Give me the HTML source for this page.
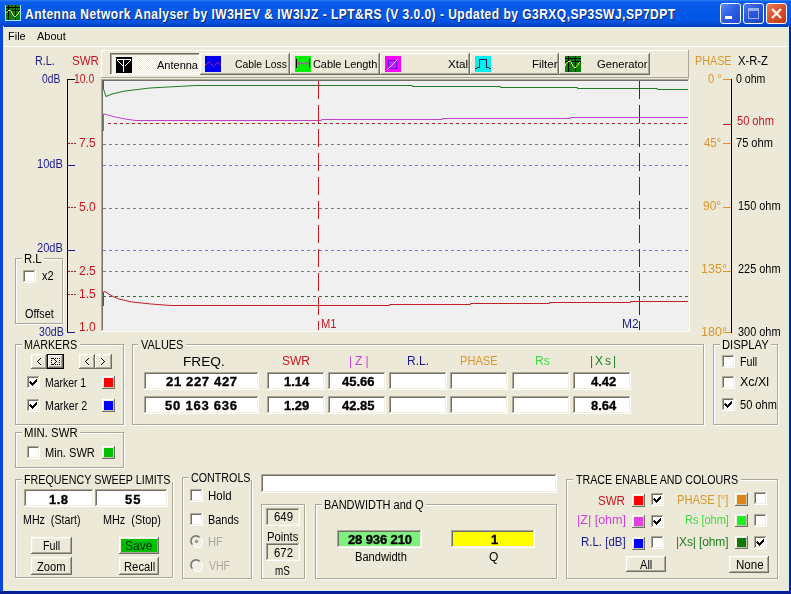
<!DOCTYPE html><html><head><meta charset="utf-8"><style>
html,body{margin:0;padding:0;width:791px;height:594px;overflow:hidden;background:#ECE9D8}
body{position:relative;font-family:"Liberation Sans",sans-serif;font-size:11px;color:#000}
body>div,body>svg{position:absolute}
#tx{position:absolute;left:0;top:0;width:791px;height:594px;will-change:transform}
#tx>div{position:absolute}
</style></head><body>
<div style="left:0;top:0;width:791px;height:27px;background:linear-gradient(#3C86F2 0px,#1565EE 1px,#0A5CEA 3px,#0558E8 12px,#0456E4 20px,#0350DA 23px,#0246CC 25px,#0A3CB8 26px,#0A3CB8 27px)"></div>
<div style="left:0px;top:26px;width:3px;height:568px;background:#0846E0;"></div>
<div style="left:3px;top:26px;width:1px;height:565px;background:#D8ECFA;"></div>
<div style="left:789px;top:26px;width:2px;height:568px;background:#0A24A0;"></div>
<div style="left:788px;top:26px;width:1px;height:565px;background:#D8ECFA;"></div>
<div style="left:0px;top:591px;width:791px;height:3px;background:#0A1E98;"></div>
<div style="left:3px;top:590px;width:786px;height:1px;background:#D8ECFA;"></div>
<div style="left:4px;top:27px;width:784px;height:563px;background:#ECE9D8;"></div>
<div style="left:3px;top:27px;width:786px;height:1px;background:#D8ECFA;"></div>
<div style="left:25px;top:4px;font-size:14px;line-height:20px;font-weight:bold;color:#fff;white-space:pre;letter-spacing:0.55px;transform:scaleX(0.859);transform-origin:0 0;text-shadow:1px 1px 0 #0A246A" id="ttl">Antenna Network Analyser by IW3HEV &amp; IW3IJZ - LPT&amp;RS (V 3.0.0) - Updated by G3RXQ,SP3SWJ,SP7DPT</div>
<div style="left:720px;top:3px;width:21px;height:21px;border:1px solid #fff;box-sizing:border-box;border-radius:3px;background:linear-gradient(135deg,#5A8CF6,#2F60E4 45%,#1E48D0)"></div>
<div style="left:743px;top:3px;width:21px;height:21px;border:1px solid #fff;box-sizing:border-box;border-radius:3px;background:linear-gradient(135deg,#4C78EC,#2A56D8 45%,#1C44C4)"></div>
<div style="left:766px;top:3px;width:21px;height:21px;border:1px solid #fff;box-sizing:border-box;border-radius:3px;background:linear-gradient(135deg,#EC7A54,#D8502A 50%,#C03A14)"></div>
<div style="left:725px;top:16px;width:7px;height:3px;background:#fff;"></div>
<div style="left:748px;top:8px;width:11px;height:11px;border:1px solid #98B0F0;border-top-width:3px;box-sizing:border-box"></div>
<svg style="left:766px;top:3px" width="21" height="21"><path d="M6 6L15 15M15 6L6 15" stroke="#FFF4E8" stroke-width="2.4"/></svg>
<div style="left:4px;top:46px;width:783px;height:1px;background:#FFFFFF;"></div>
<div style="left:67px;top:79px;width:1px;height:254px;background:#000;"></div>
<div style="left:67px;top:79px;width:8px;height:1px;background:#000;"></div>
<svg style="left:68px;top:143px" width="8" height="1"><path d="M0 0.5h8" stroke="#A82020" stroke-dasharray="2 1"/></svg>
<svg style="left:68px;top:207px" width="8" height="1"><path d="M0 0.5h8" stroke="#A82020" stroke-dasharray="2 1"/></svg>
<svg style="left:68px;top:271px" width="8" height="1"><path d="M0 0.5h8" stroke="#A82020" stroke-dasharray="2 1"/></svg>
<svg style="left:68px;top:294px" width="8" height="1"><path d="M0 0.5h8" stroke="#A82020" stroke-dasharray="2 1"/></svg>
<div style="left:68px;top:165px;width:7px;height:1px;background:#1C1C90;"></div>
<div style="left:68px;top:250px;width:7px;height:1px;background:#1C1C90;"></div>
<div style="left:67px;top:332px;width:8px;height:1px;background:#1C1C90;"></div>
<div style="left:16px;top:259px;width:48px;height:66px;border:1px solid #FFFFFF;box-sizing:border-box"></div>
<div style="left:15px;top:258px;width:48px;height:66px;border:1px solid #ACA899;box-sizing:border-box"></div>
<div style="left:22px;top:257px;width:22px;height:4px;background:#ECE9D8;"></div>
<div style="left:23px;top:270px;width:13px;height:13px;background:#fff;"></div>
<div style="left:23px;top:270px;width:13px;height:1px;background:#ACA899;"></div>
<div style="left:23px;top:270px;width:1px;height:13px;background:#ACA899;"></div>
<div style="left:23px;top:282px;width:13px;height:1px;background:#FFFFFF;"></div>
<div style="left:35px;top:270px;width:1px;height:13px;background:#FFFFFF;"></div>
<div style="left:24px;top:271px;width:11px;height:1px;background:#716F64;"></div>
<div style="left:24px;top:271px;width:1px;height:11px;background:#716F64;"></div>
<div style="left:24px;top:281px;width:11px;height:1px;background:#F1EFE2;"></div>
<div style="left:34px;top:271px;width:1px;height:11px;background:#F1EFE2;"></div>
<div style="left:731px;top:79px;width:1px;height:254px;background:#000;"></div>
<div style="left:723px;top:79px;width:8px;height:1px;background:#D8962C;"></div>
<div style="left:723px;top:143px;width:8px;height:1px;background:#D8962C;"></div>
<div style="left:723px;top:207px;width:8px;height:1px;background:#D8962C;"></div>
<div style="left:723px;top:271px;width:8px;height:1px;background:#D8962C;"></div>
<div style="left:723px;top:332px;width:8px;height:1px;background:#D8962C;"></div>
<div style="left:723px;top:124px;width:8px;height:1px;background:#C8141E;"></div>
<div style="left:101px;top:50px;width:588px;height:1px;background:#FFFFFF;"></div>
<div style="left:101px;top:50px;width:1px;height:28px;background:#FFFFFF;"></div>
<div style="left:101px;top:77px;width:588px;height:1px;background:#ACA899;"></div>
<div style="left:688px;top:50px;width:1px;height:28px;background:#ACA899;"></div>
<div style="left:110px;top:53px;width:90px;height:22px;background:repeating-conic-gradient(#FFFFFF 0 25%,#ECE9D8 0 50%) 0 0/2px 2px"></div>
<div style="left:110px;top:53px;width:90px;height:1px;background:#716F64;"></div>
<div style="left:110px;top:53px;width:1px;height:22px;background:#716F64;"></div>
<div style="left:111px;top:54px;width:88px;height:1px;background:#ACA899;"></div>
<div style="left:111px;top:54px;width:1px;height:20px;background:#ACA899;"></div>
<div style="left:110px;top:74px;width:90px;height:1px;background:#FFFFFF;"></div>
<div style="left:199px;top:53px;width:1px;height:22px;background:#FFFFFF;"></div>
<div style="left:200px;top:53px;width:90px;height:22px;background:#ECE9D8;"></div>
<div style="left:200px;top:53px;width:90px;height:1px;background:#FFFFFF;"></div>
<div style="left:200px;top:53px;width:1px;height:22px;background:#FFFFFF;"></div>
<div style="left:200px;top:74px;width:90px;height:1px;background:#716F64;"></div>
<div style="left:289px;top:53px;width:1px;height:22px;background:#716F64;"></div>
<div style="left:201px;top:54px;width:88px;height:1px;background:#F1EFE2;"></div>
<div style="left:201px;top:54px;width:1px;height:20px;background:#F1EFE2;"></div>
<div style="left:201px;top:73px;width:88px;height:1px;background:#ACA899;"></div>
<div style="left:288px;top:54px;width:1px;height:20px;background:#ACA899;"></div>
<div style="left:290px;top:53px;width:90px;height:22px;background:#ECE9D8;"></div>
<div style="left:290px;top:53px;width:90px;height:1px;background:#FFFFFF;"></div>
<div style="left:290px;top:53px;width:1px;height:22px;background:#FFFFFF;"></div>
<div style="left:290px;top:74px;width:90px;height:1px;background:#716F64;"></div>
<div style="left:379px;top:53px;width:1px;height:22px;background:#716F64;"></div>
<div style="left:291px;top:54px;width:88px;height:1px;background:#F1EFE2;"></div>
<div style="left:291px;top:54px;width:1px;height:20px;background:#F1EFE2;"></div>
<div style="left:291px;top:73px;width:88px;height:1px;background:#ACA899;"></div>
<div style="left:378px;top:54px;width:1px;height:20px;background:#ACA899;"></div>
<div style="left:380px;top:53px;width:90px;height:22px;background:#ECE9D8;"></div>
<div style="left:380px;top:53px;width:90px;height:1px;background:#FFFFFF;"></div>
<div style="left:380px;top:53px;width:1px;height:22px;background:#FFFFFF;"></div>
<div style="left:380px;top:74px;width:90px;height:1px;background:#716F64;"></div>
<div style="left:469px;top:53px;width:1px;height:22px;background:#716F64;"></div>
<div style="left:381px;top:54px;width:88px;height:1px;background:#F1EFE2;"></div>
<div style="left:381px;top:54px;width:1px;height:20px;background:#F1EFE2;"></div>
<div style="left:381px;top:73px;width:88px;height:1px;background:#ACA899;"></div>
<div style="left:468px;top:54px;width:1px;height:20px;background:#ACA899;"></div>
<div style="left:470px;top:53px;width:89px;height:22px;background:#ECE9D8;"></div>
<div style="left:470px;top:53px;width:89px;height:1px;background:#FFFFFF;"></div>
<div style="left:470px;top:53px;width:1px;height:22px;background:#FFFFFF;"></div>
<div style="left:470px;top:74px;width:89px;height:1px;background:#716F64;"></div>
<div style="left:558px;top:53px;width:1px;height:22px;background:#716F64;"></div>
<div style="left:471px;top:54px;width:87px;height:1px;background:#F1EFE2;"></div>
<div style="left:471px;top:54px;width:1px;height:20px;background:#F1EFE2;"></div>
<div style="left:471px;top:73px;width:87px;height:1px;background:#ACA899;"></div>
<div style="left:557px;top:54px;width:1px;height:20px;background:#ACA899;"></div>
<div style="left:559px;top:53px;width:91px;height:22px;background:#ECE9D8;"></div>
<div style="left:559px;top:53px;width:91px;height:1px;background:#FFFFFF;"></div>
<div style="left:559px;top:53px;width:1px;height:22px;background:#FFFFFF;"></div>
<div style="left:559px;top:74px;width:91px;height:1px;background:#716F64;"></div>
<div style="left:649px;top:53px;width:1px;height:22px;background:#716F64;"></div>
<div style="left:560px;top:54px;width:89px;height:1px;background:#F1EFE2;"></div>
<div style="left:560px;top:54px;width:1px;height:20px;background:#F1EFE2;"></div>
<div style="left:560px;top:73px;width:89px;height:1px;background:#ACA899;"></div>
<div style="left:648px;top:54px;width:1px;height:20px;background:#ACA899;"></div>
<svg style="left:116px;top:57px" width="16" height="16" shape-rendering="crispEdges"><rect width="16" height="16" fill="#000"/><rect x="1" y="2" width="14" height="1" fill="#fff"/><rect x="7" y="2" width="1" height="13" fill="#fff"/><rect x="1" y="3" width="1" height="1" fill="#fff"/><rect x="2" y="4" width="1" height="1" fill="#fff"/><rect x="3" y="5" width="1" height="1" fill="#fff"/><rect x="4" y="6" width="1" height="1" fill="#fff"/><rect x="5" y="7" width="1" height="1" fill="#fff"/><rect x="6" y="8" width="1" height="1" fill="#fff"/><rect x="14" y="3" width="1" height="1" fill="#fff"/><rect x="13" y="4" width="1" height="1" fill="#fff"/><rect x="12" y="5" width="1" height="1" fill="#fff"/><rect x="11" y="6" width="1" height="1" fill="#fff"/><rect x="10" y="7" width="1" height="1" fill="#fff"/><rect x="9" y="8" width="1" height="1" fill="#fff"/></svg>
<svg style="left:205px;top:56px" width="16" height="16" shape-rendering="crispEdges"><rect width="16" height="16" fill="#0000F0"/><rect x="0" y="8" width="2" height="1" fill="#A0208A"/><rect x="2" y="7" width="1" height="1" fill="#A0208A"/><rect x="3" y="6" width="2" height="1" fill="#A0208A"/><rect x="5" y="7" width="1" height="1" fill="#A0208A"/><rect x="6" y="8" width="1" height="1" fill="#A0208A"/><rect x="7" y="9" width="1" height="1" fill="#A0208A"/><rect x="8" y="10" width="1" height="1" fill="#A0208A"/><rect x="9" y="9" width="1" height="1" fill="#A0208A"/><rect x="10" y="8" width="1" height="1" fill="#A0208A"/><rect x="11" y="7" width="1" height="1" fill="#A0208A"/><rect x="12" y="6" width="2" height="1" fill="#A0208A"/><rect x="14" y="7" width="1" height="1" fill="#A0208A"/><rect x="15" y="8" width="1" height="1" fill="#A0208A"/></svg>
<svg style="left:295px;top:56px" width="16" height="16" shape-rendering="crispEdges"><rect width="16" height="16" fill="#00F000"/><rect x="1" y="3" width="1" height="9" fill="#000"/><rect x="14" y="3" width="1" height="9" fill="#000"/><rect x="3" y="7" width="10" height="1" fill="#9060A0"/><rect x="3" y="6" width="2" height="3" fill="#C050B0"/><rect x="11" y="6" width="2" height="3" fill="#C050B0"/></svg>
<svg style="left:385px;top:56px" width="16" height="16" shape-rendering="crispEdges"><rect width="16" height="16" fill="#FF00FF"/><rect x="3" y="4" width="9" height="9" fill="#6010E0"/><rect x="4" y="5" width="7" height="7" fill="#C020F0"/><rect x="2" y="13" width="1" height="1" fill="#FFC8FF"/><rect x="3" y="12" width="1" height="1" fill="#FFC8FF"/><rect x="4" y="11" width="1" height="1" fill="#FFC8FF"/><rect x="5" y="10" width="1" height="1" fill="#FFC8FF"/><rect x="6" y="9" width="1" height="1" fill="#FFC8FF"/><rect x="7" y="8" width="1" height="1" fill="#FFC8FF"/><rect x="8" y="7" width="1" height="1" fill="#FFC8FF"/><rect x="9" y="6" width="1" height="1" fill="#FFC8FF"/><rect x="10" y="5" width="1" height="1" fill="#FFC8FF"/><rect x="11" y="4" width="1" height="1" fill="#FFC8FF"/><rect x="12" y="3" width="1" height="1" fill="#FFC8FF"/></svg>
<svg style="left:475px;top:56px" width="16" height="16" shape-rendering="crispEdges"><rect width="16" height="16" fill="#00F0F0"/><rect x="0" y="12" width="2" height="1" fill="#102848"/><rect x="2" y="11" width="2" height="1" fill="#102848"/><rect x="4" y="3" width="1" height="9" fill="#102848"/><rect x="4" y="3" width="8" height="1" fill="#102848"/><rect x="11" y="3" width="1" height="9" fill="#102848"/><rect x="12" y="11" width="2" height="1" fill="#102848"/><rect x="14" y="12" width="2" height="1" fill="#102848"/></svg>
<svg style="left:565px;top:56px" width="16" height="16" shape-rendering="crispEdges"><rect width="16" height="16" fill="#0A800A"/><rect x="3" y="0" width="1" height="16" fill="#000"/><rect x="10" y="0" width="1" height="16" fill="#000"/><rect x="0" y="2" width="16" height="1" fill="#000"/><rect x="0" y="5" width="16" height="1" fill="#000"/><rect x="0" y="8" width="1" height="2" fill="#D8F040"/><rect x="1" y="7" width="1" height="1" fill="#D8F040"/><rect x="2" y="6" width="1" height="1" fill="#D8F040"/><rect x="3" y="5" width="3" height="1" fill="#D8F040"/><rect x="6" y="6" width="1" height="1" fill="#D8F040"/><rect x="6" y="7" width="1" height="1" fill="#D8F040"/><rect x="7" y="8" width="1" height="1" fill="#D8F040"/><rect x="7" y="9" width="1" height="1" fill="#D8F040"/><rect x="8" y="10" width="1" height="1" fill="#D8F040"/><rect x="9" y="11" width="2" height="1" fill="#D8F040"/><rect x="11" y="10" width="1" height="1" fill="#D8F040"/><rect x="12" y="9" width="1" height="1" fill="#D8F040"/><rect x="13" y="8" width="1" height="1" fill="#D8F040"/><rect x="13" y="7" width="1" height="1" fill="#D8F040"/><rect x="14" y="6" width="1" height="1" fill="#D8F040"/></svg>
<svg style="left:5px;top:5px" width="16" height="16" shape-rendering="crispEdges"><rect width="16" height="16" fill="#0A800A"/><rect x="3" y="0" width="1" height="16" fill="#000"/><rect x="10" y="0" width="1" height="16" fill="#000"/><rect x="0" y="2" width="16" height="1" fill="#000"/><rect x="0" y="5" width="16" height="1" fill="#000"/><rect x="0" y="8" width="1" height="2" fill="#D8F040"/><rect x="1" y="7" width="1" height="1" fill="#D8F040"/><rect x="2" y="6" width="1" height="1" fill="#D8F040"/><rect x="3" y="5" width="3" height="1" fill="#D8F040"/><rect x="6" y="6" width="1" height="1" fill="#D8F040"/><rect x="6" y="7" width="1" height="1" fill="#D8F040"/><rect x="7" y="8" width="1" height="1" fill="#D8F040"/><rect x="7" y="9" width="1" height="1" fill="#D8F040"/><rect x="8" y="10" width="1" height="1" fill="#D8F040"/><rect x="9" y="11" width="2" height="1" fill="#D8F040"/><rect x="11" y="10" width="1" height="1" fill="#D8F040"/><rect x="12" y="9" width="1" height="1" fill="#D8F040"/><rect x="13" y="8" width="1" height="1" fill="#D8F040"/><rect x="13" y="7" width="1" height="1" fill="#D8F040"/><rect x="14" y="6" width="1" height="1" fill="#D8F040"/><rect x="0" y="0" width="1" height="16" fill="#A8E0F8"/><rect x="0" y="15" width="16" height="1" fill="#A8E0F8"/><rect x="15" y="0" width="1" height="16" fill="#A8E0F8"/></svg>
<div style="left:101px;top:79px;width:589px;height:253px;background:#F0F0F0;"></div>
<div style="left:101px;top:79px;width:589px;height:1px;background:#ACA899;"></div>
<div style="left:101px;top:79px;width:1px;height:253px;background:#ACA899;"></div>
<div style="left:101px;top:331px;width:589px;height:1px;background:#FFFFFF;"></div>
<div style="left:689px;top:79px;width:1px;height:253px;background:#FFFFFF;"></div>
<div style="left:102px;top:80px;width:587px;height:1px;background:#716F64;"></div>
<div style="left:102px;top:80px;width:1px;height:251px;background:#716F64;"></div>
<div style="left:102px;top:330px;width:587px;height:1px;background:#F1EFE2;"></div>
<div style="left:688px;top:80px;width:1px;height:251px;background:#F1EFE2;"></div>
<svg style="left:0;top:0" width="791" height="594"><path d="M108 123.5H688" stroke="#A82020" stroke-width="1" stroke-dasharray="3 3"/><path d="M103 144.5H688" stroke="#7C7C7C" stroke-width="1" stroke-dasharray="3 3"/><path d="M103 165.5H688" stroke="#7878D0" stroke-width="1" stroke-dasharray="3 3"/><path d="M103 208.5H688" stroke="#7C7C7C" stroke-width="1" stroke-dasharray="3 3"/><path d="M103 250.5H688" stroke="#7878D0" stroke-width="1" stroke-dasharray="3 3"/><path d="M103 271.5H688" stroke="#7C7C7C" stroke-width="1" stroke-dasharray="3 3"/><path d="M103 296.5H688" stroke="#386A38" stroke-width="1" stroke-dasharray="3 3"/><path d="M103.5 81V89L106 96.5L112 94L125 91L150 88L168 87L196 85.5H412.5V86.5H500.5V87.5H577.5V88.5H657.5V89.5H688" stroke="#207A26" stroke-width="1" fill="none"/><path d="M103.5 131V114L106 114.5L113 116.5L125 119L136 120.5H321.5V119.5H442.5V118.5H570.5V117.5H688" stroke="#C040D0" stroke-width="1" fill="none"/><path d="M103.5 306V292L105 291.5L111 295.5L119 299L132 302L151 304L171 305.5H389.5V304.5H470.5V303.5H549.5V302.5H630.5V301.5H688" stroke="#C41E28" stroke-width="1" fill="none"/><path d="M318.5 81V330" stroke="#C81E28" stroke-width="1" stroke-dasharray="18 6"/><path d="M639.5 81V330" stroke="#2020A8" stroke-width="1" stroke-dasharray="18 6"/></svg>
<div style="left:16px;top:345px;width:109px;height:81px;border:1px solid #FFFFFF;box-sizing:border-box"></div>
<div style="left:15px;top:344px;width:109px;height:81px;border:1px solid #ACA899;box-sizing:border-box"></div>
<div style="left:22px;top:343px;width:58px;height:4px;background:#ECE9D8;"></div>
<div style="left:31px;top:354px;width:16px;height:15px;background:#ECE9D8;"></div>
<div style="left:31px;top:354px;width:16px;height:1px;background:#FFFFFF;"></div>
<div style="left:31px;top:354px;width:1px;height:15px;background:#FFFFFF;"></div>
<div style="left:31px;top:368px;width:16px;height:1px;background:#716F64;"></div>
<div style="left:46px;top:354px;width:1px;height:15px;background:#716F64;"></div>
<div style="left:32px;top:355px;width:14px;height:1px;background:#F1EFE2;"></div>
<div style="left:32px;top:355px;width:1px;height:13px;background:#F1EFE2;"></div>
<div style="left:32px;top:367px;width:14px;height:1px;background:#ACA899;"></div>
<div style="left:45px;top:355px;width:1px;height:13px;background:#ACA899;"></div>
<div style="left:47px;top:354px;width:17px;height:15px;background:#000;"></div>
<div style="left:48px;top:355px;width:15px;height:13px;background:#ECE9D8;"></div>
<div style="left:48px;top:355px;width:15px;height:1px;background:#FFFFFF;"></div>
<div style="left:48px;top:355px;width:1px;height:13px;background:#FFFFFF;"></div>
<div style="left:48px;top:367px;width:15px;height:1px;background:#716F64;"></div>
<div style="left:62px;top:355px;width:1px;height:13px;background:#716F64;"></div>
<div style="left:49px;top:356px;width:13px;height:1px;background:#F1EFE2;"></div>
<div style="left:49px;top:356px;width:1px;height:11px;background:#F1EFE2;"></div>
<div style="left:49px;top:366px;width:13px;height:1px;background:#ACA899;"></div>
<div style="left:61px;top:356px;width:1px;height:11px;background:#ACA899;"></div>
<div style="left:79px;top:354px;width:16px;height:15px;background:#ECE9D8;"></div>
<div style="left:79px;top:354px;width:16px;height:1px;background:#FFFFFF;"></div>
<div style="left:79px;top:354px;width:1px;height:15px;background:#FFFFFF;"></div>
<div style="left:79px;top:368px;width:16px;height:1px;background:#716F64;"></div>
<div style="left:94px;top:354px;width:1px;height:15px;background:#716F64;"></div>
<div style="left:80px;top:355px;width:14px;height:1px;background:#F1EFE2;"></div>
<div style="left:80px;top:355px;width:1px;height:13px;background:#F1EFE2;"></div>
<div style="left:80px;top:367px;width:14px;height:1px;background:#ACA899;"></div>
<div style="left:93px;top:355px;width:1px;height:13px;background:#ACA899;"></div>
<div style="left:95px;top:354px;width:17px;height:15px;background:#ECE9D8;"></div>
<div style="left:95px;top:354px;width:17px;height:1px;background:#FFFFFF;"></div>
<div style="left:95px;top:354px;width:1px;height:15px;background:#FFFFFF;"></div>
<div style="left:95px;top:368px;width:17px;height:1px;background:#716F64;"></div>
<div style="left:111px;top:354px;width:1px;height:15px;background:#716F64;"></div>
<div style="left:96px;top:355px;width:15px;height:1px;background:#F1EFE2;"></div>
<div style="left:96px;top:355px;width:1px;height:13px;background:#F1EFE2;"></div>
<div style="left:96px;top:367px;width:15px;height:1px;background:#ACA899;"></div>
<div style="left:110px;top:355px;width:1px;height:13px;background:#ACA899;"></div>
<svg style="left:37px;top:358px" width="4" height="7" shape-rendering="crispEdges"><rect x="3" y="0" width="1" height="1" fill="#000"/><rect x="2" y="1" width="1" height="1" fill="#000"/><rect x="1" y="2" width="1" height="1" fill="#000"/><rect x="0" y="3" width="1" height="1" fill="#000"/><rect x="1" y="4" width="1" height="1" fill="#000"/><rect x="2" y="5" width="1" height="1" fill="#000"/><rect x="3" y="6" width="1" height="1" fill="#000"/></svg>
<svg style="left:85px;top:358px" width="4" height="7" shape-rendering="crispEdges"><rect x="3" y="0" width="1" height="1" fill="#000"/><rect x="2" y="1" width="1" height="1" fill="#000"/><rect x="1" y="2" width="1" height="1" fill="#000"/><rect x="0" y="3" width="1" height="1" fill="#000"/><rect x="1" y="4" width="1" height="1" fill="#000"/><rect x="2" y="5" width="1" height="1" fill="#000"/><rect x="3" y="6" width="1" height="1" fill="#000"/></svg>
<svg style="left:101px;top:358px" width="4" height="7" shape-rendering="crispEdges"><rect x="0" y="0" width="1" height="1" fill="#000"/><rect x="1" y="1" width="1" height="1" fill="#000"/><rect x="2" y="2" width="1" height="1" fill="#000"/><rect x="3" y="3" width="1" height="1" fill="#000"/><rect x="2" y="4" width="1" height="1" fill="#000"/><rect x="1" y="5" width="1" height="1" fill="#000"/><rect x="0" y="6" width="1" height="1" fill="#000"/></svg>
<svg style="left:50px;top:357px" width="11" height="9" shape-rendering="crispEdges"><rect x="1" y="1" width="1" height="1" fill="#000"/><rect x="1" y="3" width="1" height="1" fill="#000"/><rect x="1" y="5" width="1" height="1" fill="#000"/><rect x="1" y="7" width="1" height="1" fill="#000"/><rect x="2" y="1" width="1" height="1" fill="#000"/><rect x="2" y="7" width="1" height="1" fill="#000"/><rect x="3" y="1" width="1" height="1" fill="#000"/><rect x="3" y="7" width="1" height="1" fill="#000"/><rect x="4" y="2" width="1" height="1" fill="#000"/><rect x="4" y="6" width="1" height="1" fill="#000"/><rect x="5" y="1" width="1" height="1" fill="#000"/><rect x="5" y="3" width="1" height="1" fill="#000"/><rect x="5" y="5" width="1" height="1" fill="#000"/><rect x="5" y="7" width="1" height="1" fill="#000"/><rect x="6" y="4" width="1" height="1" fill="#000"/><rect x="7" y="1" width="1" height="1" fill="#000"/><rect x="7" y="7" width="1" height="1" fill="#000"/><rect x="9" y="1" width="1" height="1" fill="#000"/><rect x="9" y="3" width="1" height="1" fill="#000"/><rect x="9" y="5" width="1" height="1" fill="#000"/><rect x="9" y="7" width="1" height="1" fill="#000"/></svg>
<div style="left:27px;top:376px;width:13px;height:13px;background:#fff;"></div>
<div style="left:27px;top:376px;width:13px;height:1px;background:#ACA899;"></div>
<div style="left:27px;top:376px;width:1px;height:13px;background:#ACA899;"></div>
<div style="left:27px;top:388px;width:13px;height:1px;background:#FFFFFF;"></div>
<div style="left:39px;top:376px;width:1px;height:13px;background:#FFFFFF;"></div>
<div style="left:28px;top:377px;width:11px;height:1px;background:#716F64;"></div>
<div style="left:28px;top:377px;width:1px;height:11px;background:#716F64;"></div>
<div style="left:28px;top:387px;width:11px;height:1px;background:#F1EFE2;"></div>
<div style="left:38px;top:377px;width:1px;height:11px;background:#F1EFE2;"></div>
<svg style="left:27px;top:376px" width="13" height="13"><path d="M3 5h1v1h1v1h1v-1h1v-1h1v-1h1v-1h1v3h-1v1h-1v1h-1v1h-1v1h-1v-1h-1v-1h-1v-1h-1z" fill="#000"/></svg>
<div style="left:102px;top:376px;width:13px;height:13px;background:#FF0000;"></div>
<div style="left:102px;top:376px;width:13px;height:1px;background:#FFFFFF;"></div>
<div style="left:102px;top:376px;width:1px;height:13px;background:#FFFFFF;"></div>
<div style="left:102px;top:388px;width:13px;height:1px;background:#716F64;"></div>
<div style="left:114px;top:376px;width:1px;height:13px;background:#716F64;"></div>
<div style="left:103px;top:377px;width:11px;height:1px;background:#F1EFE2;"></div>
<div style="left:103px;top:377px;width:1px;height:11px;background:#F1EFE2;"></div>
<div style="left:103px;top:387px;width:11px;height:1px;background:#C8C4B4;"></div>
<div style="left:113px;top:377px;width:1px;height:11px;background:#C8C4B4;"></div>
<div style="left:27px;top:399px;width:13px;height:13px;background:#fff;"></div>
<div style="left:27px;top:399px;width:13px;height:1px;background:#ACA899;"></div>
<div style="left:27px;top:399px;width:1px;height:13px;background:#ACA899;"></div>
<div style="left:27px;top:411px;width:13px;height:1px;background:#FFFFFF;"></div>
<div style="left:39px;top:399px;width:1px;height:13px;background:#FFFFFF;"></div>
<div style="left:28px;top:400px;width:11px;height:1px;background:#716F64;"></div>
<div style="left:28px;top:400px;width:1px;height:11px;background:#716F64;"></div>
<div style="left:28px;top:410px;width:11px;height:1px;background:#F1EFE2;"></div>
<div style="left:38px;top:400px;width:1px;height:11px;background:#F1EFE2;"></div>
<svg style="left:27px;top:399px" width="13" height="13"><path d="M3 5h1v1h1v1h1v-1h1v-1h1v-1h1v-1h1v3h-1v1h-1v1h-1v1h-1v1h-1v-1h-1v-1h-1v-1h-1z" fill="#000"/></svg>
<div style="left:102px;top:399px;width:13px;height:13px;background:#0000FF;"></div>
<div style="left:102px;top:399px;width:13px;height:1px;background:#FFFFFF;"></div>
<div style="left:102px;top:399px;width:1px;height:13px;background:#FFFFFF;"></div>
<div style="left:102px;top:411px;width:13px;height:1px;background:#716F64;"></div>
<div style="left:114px;top:399px;width:1px;height:13px;background:#716F64;"></div>
<div style="left:103px;top:400px;width:11px;height:1px;background:#F1EFE2;"></div>
<div style="left:103px;top:400px;width:1px;height:11px;background:#F1EFE2;"></div>
<div style="left:103px;top:410px;width:11px;height:1px;background:#C8C4B4;"></div>
<div style="left:113px;top:400px;width:1px;height:11px;background:#C8C4B4;"></div>
<div style="left:133px;top:345px;width:572px;height:81px;border:1px solid #FFFFFF;box-sizing:border-box"></div>
<div style="left:132px;top:344px;width:572px;height:81px;border:1px solid #ACA899;box-sizing:border-box"></div>
<div style="left:138px;top:343px;width:48px;height:4px;background:#ECE9D8;"></div>
<div style="left:144px;top:372px;width:115px;height:18px;background:#fff;"></div>
<div style="left:144px;top:372px;width:115px;height:1px;background:#ACA899;"></div>
<div style="left:144px;top:372px;width:1px;height:18px;background:#ACA899;"></div>
<div style="left:144px;top:389px;width:115px;height:1px;background:#FFFFFF;"></div>
<div style="left:258px;top:372px;width:1px;height:18px;background:#FFFFFF;"></div>
<div style="left:145px;top:373px;width:113px;height:1px;background:#716F64;"></div>
<div style="left:145px;top:373px;width:1px;height:16px;background:#716F64;"></div>
<div style="left:145px;top:388px;width:113px;height:1px;background:#F1EFE2;"></div>
<div style="left:257px;top:373px;width:1px;height:16px;background:#F1EFE2;"></div>
<div style="left:267px;top:372px;width:58px;height:18px;background:#fff;"></div>
<div style="left:267px;top:372px;width:58px;height:1px;background:#ACA899;"></div>
<div style="left:267px;top:372px;width:1px;height:18px;background:#ACA899;"></div>
<div style="left:267px;top:389px;width:58px;height:1px;background:#FFFFFF;"></div>
<div style="left:324px;top:372px;width:1px;height:18px;background:#FFFFFF;"></div>
<div style="left:268px;top:373px;width:56px;height:1px;background:#716F64;"></div>
<div style="left:268px;top:373px;width:1px;height:16px;background:#716F64;"></div>
<div style="left:268px;top:388px;width:56px;height:1px;background:#F1EFE2;"></div>
<div style="left:323px;top:373px;width:1px;height:16px;background:#F1EFE2;"></div>
<div style="left:328px;top:372px;width:58px;height:18px;background:#fff;"></div>
<div style="left:328px;top:372px;width:58px;height:1px;background:#ACA899;"></div>
<div style="left:328px;top:372px;width:1px;height:18px;background:#ACA899;"></div>
<div style="left:328px;top:389px;width:58px;height:1px;background:#FFFFFF;"></div>
<div style="left:385px;top:372px;width:1px;height:18px;background:#FFFFFF;"></div>
<div style="left:329px;top:373px;width:56px;height:1px;background:#716F64;"></div>
<div style="left:329px;top:373px;width:1px;height:16px;background:#716F64;"></div>
<div style="left:329px;top:388px;width:56px;height:1px;background:#F1EFE2;"></div>
<div style="left:384px;top:373px;width:1px;height:16px;background:#F1EFE2;"></div>
<div style="left:389px;top:372px;width:58px;height:18px;background:#fff;"></div>
<div style="left:389px;top:372px;width:58px;height:1px;background:#ACA899;"></div>
<div style="left:389px;top:372px;width:1px;height:18px;background:#ACA899;"></div>
<div style="left:389px;top:389px;width:58px;height:1px;background:#FFFFFF;"></div>
<div style="left:446px;top:372px;width:1px;height:18px;background:#FFFFFF;"></div>
<div style="left:390px;top:373px;width:56px;height:1px;background:#716F64;"></div>
<div style="left:390px;top:373px;width:1px;height:16px;background:#716F64;"></div>
<div style="left:390px;top:388px;width:56px;height:1px;background:#F1EFE2;"></div>
<div style="left:445px;top:373px;width:1px;height:16px;background:#F1EFE2;"></div>
<div style="left:450px;top:372px;width:58px;height:18px;background:#fff;"></div>
<div style="left:450px;top:372px;width:58px;height:1px;background:#ACA899;"></div>
<div style="left:450px;top:372px;width:1px;height:18px;background:#ACA899;"></div>
<div style="left:450px;top:389px;width:58px;height:1px;background:#FFFFFF;"></div>
<div style="left:507px;top:372px;width:1px;height:18px;background:#FFFFFF;"></div>
<div style="left:451px;top:373px;width:56px;height:1px;background:#716F64;"></div>
<div style="left:451px;top:373px;width:1px;height:16px;background:#716F64;"></div>
<div style="left:451px;top:388px;width:56px;height:1px;background:#F1EFE2;"></div>
<div style="left:506px;top:373px;width:1px;height:16px;background:#F1EFE2;"></div>
<div style="left:512px;top:372px;width:58px;height:18px;background:#fff;"></div>
<div style="left:512px;top:372px;width:58px;height:1px;background:#ACA899;"></div>
<div style="left:512px;top:372px;width:1px;height:18px;background:#ACA899;"></div>
<div style="left:512px;top:389px;width:58px;height:1px;background:#FFFFFF;"></div>
<div style="left:569px;top:372px;width:1px;height:18px;background:#FFFFFF;"></div>
<div style="left:513px;top:373px;width:56px;height:1px;background:#716F64;"></div>
<div style="left:513px;top:373px;width:1px;height:16px;background:#716F64;"></div>
<div style="left:513px;top:388px;width:56px;height:1px;background:#F1EFE2;"></div>
<div style="left:568px;top:373px;width:1px;height:16px;background:#F1EFE2;"></div>
<div style="left:573px;top:372px;width:58px;height:18px;background:#fff;"></div>
<div style="left:573px;top:372px;width:58px;height:1px;background:#ACA899;"></div>
<div style="left:573px;top:372px;width:1px;height:18px;background:#ACA899;"></div>
<div style="left:573px;top:389px;width:58px;height:1px;background:#FFFFFF;"></div>
<div style="left:630px;top:372px;width:1px;height:18px;background:#FFFFFF;"></div>
<div style="left:574px;top:373px;width:56px;height:1px;background:#716F64;"></div>
<div style="left:574px;top:373px;width:1px;height:16px;background:#716F64;"></div>
<div style="left:574px;top:388px;width:56px;height:1px;background:#F1EFE2;"></div>
<div style="left:629px;top:373px;width:1px;height:16px;background:#F1EFE2;"></div>
<div style="left:144px;top:396px;width:115px;height:18px;background:#fff;"></div>
<div style="left:144px;top:396px;width:115px;height:1px;background:#ACA899;"></div>
<div style="left:144px;top:396px;width:1px;height:18px;background:#ACA899;"></div>
<div style="left:144px;top:413px;width:115px;height:1px;background:#FFFFFF;"></div>
<div style="left:258px;top:396px;width:1px;height:18px;background:#FFFFFF;"></div>
<div style="left:145px;top:397px;width:113px;height:1px;background:#716F64;"></div>
<div style="left:145px;top:397px;width:1px;height:16px;background:#716F64;"></div>
<div style="left:145px;top:412px;width:113px;height:1px;background:#F1EFE2;"></div>
<div style="left:257px;top:397px;width:1px;height:16px;background:#F1EFE2;"></div>
<div style="left:267px;top:396px;width:58px;height:18px;background:#fff;"></div>
<div style="left:267px;top:396px;width:58px;height:1px;background:#ACA899;"></div>
<div style="left:267px;top:396px;width:1px;height:18px;background:#ACA899;"></div>
<div style="left:267px;top:413px;width:58px;height:1px;background:#FFFFFF;"></div>
<div style="left:324px;top:396px;width:1px;height:18px;background:#FFFFFF;"></div>
<div style="left:268px;top:397px;width:56px;height:1px;background:#716F64;"></div>
<div style="left:268px;top:397px;width:1px;height:16px;background:#716F64;"></div>
<div style="left:268px;top:412px;width:56px;height:1px;background:#F1EFE2;"></div>
<div style="left:323px;top:397px;width:1px;height:16px;background:#F1EFE2;"></div>
<div style="left:328px;top:396px;width:58px;height:18px;background:#fff;"></div>
<div style="left:328px;top:396px;width:58px;height:1px;background:#ACA899;"></div>
<div style="left:328px;top:396px;width:1px;height:18px;background:#ACA899;"></div>
<div style="left:328px;top:413px;width:58px;height:1px;background:#FFFFFF;"></div>
<div style="left:385px;top:396px;width:1px;height:18px;background:#FFFFFF;"></div>
<div style="left:329px;top:397px;width:56px;height:1px;background:#716F64;"></div>
<div style="left:329px;top:397px;width:1px;height:16px;background:#716F64;"></div>
<div style="left:329px;top:412px;width:56px;height:1px;background:#F1EFE2;"></div>
<div style="left:384px;top:397px;width:1px;height:16px;background:#F1EFE2;"></div>
<div style="left:389px;top:396px;width:58px;height:18px;background:#fff;"></div>
<div style="left:389px;top:396px;width:58px;height:1px;background:#ACA899;"></div>
<div style="left:389px;top:396px;width:1px;height:18px;background:#ACA899;"></div>
<div style="left:389px;top:413px;width:58px;height:1px;background:#FFFFFF;"></div>
<div style="left:446px;top:396px;width:1px;height:18px;background:#FFFFFF;"></div>
<div style="left:390px;top:397px;width:56px;height:1px;background:#716F64;"></div>
<div style="left:390px;top:397px;width:1px;height:16px;background:#716F64;"></div>
<div style="left:390px;top:412px;width:56px;height:1px;background:#F1EFE2;"></div>
<div style="left:445px;top:397px;width:1px;height:16px;background:#F1EFE2;"></div>
<div style="left:450px;top:396px;width:58px;height:18px;background:#fff;"></div>
<div style="left:450px;top:396px;width:58px;height:1px;background:#ACA899;"></div>
<div style="left:450px;top:396px;width:1px;height:18px;background:#ACA899;"></div>
<div style="left:450px;top:413px;width:58px;height:1px;background:#FFFFFF;"></div>
<div style="left:507px;top:396px;width:1px;height:18px;background:#FFFFFF;"></div>
<div style="left:451px;top:397px;width:56px;height:1px;background:#716F64;"></div>
<div style="left:451px;top:397px;width:1px;height:16px;background:#716F64;"></div>
<div style="left:451px;top:412px;width:56px;height:1px;background:#F1EFE2;"></div>
<div style="left:506px;top:397px;width:1px;height:16px;background:#F1EFE2;"></div>
<div style="left:512px;top:396px;width:58px;height:18px;background:#fff;"></div>
<div style="left:512px;top:396px;width:58px;height:1px;background:#ACA899;"></div>
<div style="left:512px;top:396px;width:1px;height:18px;background:#ACA899;"></div>
<div style="left:512px;top:413px;width:58px;height:1px;background:#FFFFFF;"></div>
<div style="left:569px;top:396px;width:1px;height:18px;background:#FFFFFF;"></div>
<div style="left:513px;top:397px;width:56px;height:1px;background:#716F64;"></div>
<div style="left:513px;top:397px;width:1px;height:16px;background:#716F64;"></div>
<div style="left:513px;top:412px;width:56px;height:1px;background:#F1EFE2;"></div>
<div style="left:568px;top:397px;width:1px;height:16px;background:#F1EFE2;"></div>
<div style="left:573px;top:396px;width:58px;height:18px;background:#fff;"></div>
<div style="left:573px;top:396px;width:58px;height:1px;background:#ACA899;"></div>
<div style="left:573px;top:396px;width:1px;height:18px;background:#ACA899;"></div>
<div style="left:573px;top:413px;width:58px;height:1px;background:#FFFFFF;"></div>
<div style="left:630px;top:396px;width:1px;height:18px;background:#FFFFFF;"></div>
<div style="left:574px;top:397px;width:56px;height:1px;background:#716F64;"></div>
<div style="left:574px;top:397px;width:1px;height:16px;background:#716F64;"></div>
<div style="left:574px;top:412px;width:56px;height:1px;background:#F1EFE2;"></div>
<div style="left:629px;top:397px;width:1px;height:16px;background:#F1EFE2;"></div>
<div style="left:714px;top:345px;width:65px;height:81px;border:1px solid #FFFFFF;box-sizing:border-box"></div>
<div style="left:713px;top:344px;width:65px;height:81px;border:1px solid #ACA899;box-sizing:border-box"></div>
<div style="left:720px;top:343px;width:51px;height:4px;background:#ECE9D8;"></div>
<div style="left:722px;top:355px;width:13px;height:13px;background:#fff;"></div>
<div style="left:722px;top:355px;width:13px;height:1px;background:#ACA899;"></div>
<div style="left:722px;top:355px;width:1px;height:13px;background:#ACA899;"></div>
<div style="left:722px;top:367px;width:13px;height:1px;background:#FFFFFF;"></div>
<div style="left:734px;top:355px;width:1px;height:13px;background:#FFFFFF;"></div>
<div style="left:723px;top:356px;width:11px;height:1px;background:#716F64;"></div>
<div style="left:723px;top:356px;width:1px;height:11px;background:#716F64;"></div>
<div style="left:723px;top:366px;width:11px;height:1px;background:#F1EFE2;"></div>
<div style="left:733px;top:356px;width:1px;height:11px;background:#F1EFE2;"></div>
<div style="left:722px;top:376px;width:13px;height:13px;background:#fff;"></div>
<div style="left:722px;top:376px;width:13px;height:1px;background:#ACA899;"></div>
<div style="left:722px;top:376px;width:1px;height:13px;background:#ACA899;"></div>
<div style="left:722px;top:388px;width:13px;height:1px;background:#FFFFFF;"></div>
<div style="left:734px;top:376px;width:1px;height:13px;background:#FFFFFF;"></div>
<div style="left:723px;top:377px;width:11px;height:1px;background:#716F64;"></div>
<div style="left:723px;top:377px;width:1px;height:11px;background:#716F64;"></div>
<div style="left:723px;top:387px;width:11px;height:1px;background:#F1EFE2;"></div>
<div style="left:733px;top:377px;width:1px;height:11px;background:#F1EFE2;"></div>
<div style="left:722px;top:398px;width:13px;height:13px;background:#fff;"></div>
<div style="left:722px;top:398px;width:13px;height:1px;background:#ACA899;"></div>
<div style="left:722px;top:398px;width:1px;height:13px;background:#ACA899;"></div>
<div style="left:722px;top:410px;width:13px;height:1px;background:#FFFFFF;"></div>
<div style="left:734px;top:398px;width:1px;height:13px;background:#FFFFFF;"></div>
<div style="left:723px;top:399px;width:11px;height:1px;background:#716F64;"></div>
<div style="left:723px;top:399px;width:1px;height:11px;background:#716F64;"></div>
<div style="left:723px;top:409px;width:11px;height:1px;background:#F1EFE2;"></div>
<div style="left:733px;top:399px;width:1px;height:11px;background:#F1EFE2;"></div>
<svg style="left:722px;top:398px" width="13" height="13"><path d="M3 5h1v1h1v1h1v-1h1v-1h1v-1h1v-1h1v3h-1v1h-1v1h-1v1h-1v1h-1v-1h-1v-1h-1v-1h-1z" fill="#000"/></svg>
<div style="left:16px;top:433px;width:109px;height:36px;border:1px solid #FFFFFF;box-sizing:border-box"></div>
<div style="left:15px;top:432px;width:109px;height:36px;border:1px solid #ACA899;box-sizing:border-box"></div>
<div style="left:22px;top:431px;width:58px;height:4px;background:#ECE9D8;"></div>
<div style="left:27px;top:446px;width:13px;height:13px;background:#fff;"></div>
<div style="left:27px;top:446px;width:13px;height:1px;background:#ACA899;"></div>
<div style="left:27px;top:446px;width:1px;height:13px;background:#ACA899;"></div>
<div style="left:27px;top:458px;width:13px;height:1px;background:#FFFFFF;"></div>
<div style="left:39px;top:446px;width:1px;height:13px;background:#FFFFFF;"></div>
<div style="left:28px;top:447px;width:11px;height:1px;background:#716F64;"></div>
<div style="left:28px;top:447px;width:1px;height:11px;background:#716F64;"></div>
<div style="left:28px;top:457px;width:11px;height:1px;background:#F1EFE2;"></div>
<div style="left:38px;top:447px;width:1px;height:11px;background:#F1EFE2;"></div>
<div style="left:102px;top:446px;width:13px;height:13px;background:#00C000;"></div>
<div style="left:102px;top:446px;width:13px;height:1px;background:#FFFFFF;"></div>
<div style="left:102px;top:446px;width:1px;height:13px;background:#FFFFFF;"></div>
<div style="left:102px;top:458px;width:13px;height:1px;background:#716F64;"></div>
<div style="left:114px;top:446px;width:1px;height:13px;background:#716F64;"></div>
<div style="left:103px;top:447px;width:11px;height:1px;background:#F1EFE2;"></div>
<div style="left:103px;top:447px;width:1px;height:11px;background:#F1EFE2;"></div>
<div style="left:103px;top:457px;width:11px;height:1px;background:#C8C4B4;"></div>
<div style="left:113px;top:447px;width:1px;height:11px;background:#C8C4B4;"></div>
<div style="left:16px;top:480px;width:158px;height:99px;border:1px solid #FFFFFF;box-sizing:border-box"></div>
<div style="left:15px;top:479px;width:158px;height:99px;border:1px solid #ACA899;box-sizing:border-box"></div>
<div style="left:22px;top:478px;width:151px;height:4px;background:#ECE9D8;"></div>
<div style="left:24px;top:489px;width:70px;height:18px;background:#fff;"></div>
<div style="left:24px;top:489px;width:70px;height:1px;background:#ACA899;"></div>
<div style="left:24px;top:489px;width:1px;height:18px;background:#ACA899;"></div>
<div style="left:24px;top:506px;width:70px;height:1px;background:#FFFFFF;"></div>
<div style="left:93px;top:489px;width:1px;height:18px;background:#FFFFFF;"></div>
<div style="left:25px;top:490px;width:68px;height:1px;background:#716F64;"></div>
<div style="left:25px;top:490px;width:1px;height:16px;background:#716F64;"></div>
<div style="left:25px;top:505px;width:68px;height:1px;background:#F1EFE2;"></div>
<div style="left:92px;top:490px;width:1px;height:16px;background:#F1EFE2;"></div>
<div style="left:95px;top:489px;width:73px;height:18px;background:#fff;"></div>
<div style="left:95px;top:489px;width:73px;height:1px;background:#ACA899;"></div>
<div style="left:95px;top:489px;width:1px;height:18px;background:#ACA899;"></div>
<div style="left:95px;top:506px;width:73px;height:1px;background:#FFFFFF;"></div>
<div style="left:167px;top:489px;width:1px;height:18px;background:#FFFFFF;"></div>
<div style="left:96px;top:490px;width:71px;height:1px;background:#716F64;"></div>
<div style="left:96px;top:490px;width:1px;height:16px;background:#716F64;"></div>
<div style="left:96px;top:505px;width:71px;height:1px;background:#F1EFE2;"></div>
<div style="left:166px;top:490px;width:1px;height:16px;background:#F1EFE2;"></div>
<div style="left:31px;top:537px;width:41px;height:17px;background:#ECE9D8;"></div>
<div style="left:31px;top:537px;width:41px;height:1px;background:#FFFFFF;"></div>
<div style="left:31px;top:537px;width:1px;height:17px;background:#FFFFFF;"></div>
<div style="left:31px;top:553px;width:41px;height:1px;background:#716F64;"></div>
<div style="left:71px;top:537px;width:1px;height:17px;background:#716F64;"></div>
<div style="left:32px;top:538px;width:39px;height:1px;background:#F1EFE2;"></div>
<div style="left:32px;top:538px;width:1px;height:15px;background:#F1EFE2;"></div>
<div style="left:32px;top:552px;width:39px;height:1px;background:#ACA899;"></div>
<div style="left:70px;top:538px;width:1px;height:15px;background:#ACA899;"></div>
<div style="left:31px;top:557px;width:41px;height:18px;background:#ECE9D8;"></div>
<div style="left:31px;top:557px;width:41px;height:1px;background:#FFFFFF;"></div>
<div style="left:31px;top:557px;width:1px;height:18px;background:#FFFFFF;"></div>
<div style="left:31px;top:574px;width:41px;height:1px;background:#716F64;"></div>
<div style="left:71px;top:557px;width:1px;height:18px;background:#716F64;"></div>
<div style="left:32px;top:558px;width:39px;height:1px;background:#F1EFE2;"></div>
<div style="left:32px;top:558px;width:1px;height:16px;background:#F1EFE2;"></div>
<div style="left:32px;top:573px;width:39px;height:1px;background:#ACA899;"></div>
<div style="left:70px;top:558px;width:1px;height:16px;background:#ACA899;"></div>
<div style="left:119px;top:537px;width:40px;height:17px;background:#00C000;"></div>
<div style="left:119px;top:537px;width:40px;height:1px;background:#FFFFFF;"></div>
<div style="left:119px;top:537px;width:1px;height:17px;background:#FFFFFF;"></div>
<div style="left:119px;top:553px;width:40px;height:1px;background:#716F64;"></div>
<div style="left:158px;top:537px;width:1px;height:17px;background:#716F64;"></div>
<div style="left:120px;top:538px;width:38px;height:1px;background:#F1EFE2;"></div>
<div style="left:120px;top:538px;width:1px;height:15px;background:#F1EFE2;"></div>
<div style="left:120px;top:552px;width:38px;height:1px;background:#ACA899;"></div>
<div style="left:157px;top:538px;width:1px;height:15px;background:#ACA899;"></div>
<div style="left:119px;top:557px;width:40px;height:18px;background:#ECE9D8;"></div>
<div style="left:119px;top:557px;width:40px;height:1px;background:#FFFFFF;"></div>
<div style="left:119px;top:557px;width:1px;height:18px;background:#FFFFFF;"></div>
<div style="left:119px;top:574px;width:40px;height:1px;background:#716F64;"></div>
<div style="left:158px;top:557px;width:1px;height:18px;background:#716F64;"></div>
<div style="left:120px;top:558px;width:38px;height:1px;background:#F1EFE2;"></div>
<div style="left:120px;top:558px;width:1px;height:16px;background:#F1EFE2;"></div>
<div style="left:120px;top:573px;width:38px;height:1px;background:#ACA899;"></div>
<div style="left:157px;top:558px;width:1px;height:16px;background:#ACA899;"></div>
<div style="left:183px;top:478px;width:70px;height:102px;border:1px solid #FFFFFF;box-sizing:border-box"></div>
<div style="left:182px;top:477px;width:70px;height:102px;border:1px solid #ACA899;box-sizing:border-box"></div>
<div style="left:189px;top:476px;width:64px;height:4px;background:#ECE9D8;"></div>
<div style="left:190px;top:489px;width:13px;height:13px;background:#fff;"></div>
<div style="left:190px;top:489px;width:13px;height:1px;background:#ACA899;"></div>
<div style="left:190px;top:489px;width:1px;height:13px;background:#ACA899;"></div>
<div style="left:190px;top:501px;width:13px;height:1px;background:#FFFFFF;"></div>
<div style="left:202px;top:489px;width:1px;height:13px;background:#FFFFFF;"></div>
<div style="left:191px;top:490px;width:11px;height:1px;background:#716F64;"></div>
<div style="left:191px;top:490px;width:1px;height:11px;background:#716F64;"></div>
<div style="left:191px;top:500px;width:11px;height:1px;background:#F1EFE2;"></div>
<div style="left:201px;top:490px;width:1px;height:11px;background:#F1EFE2;"></div>
<div style="left:190px;top:513px;width:13px;height:13px;background:#fff;"></div>
<div style="left:190px;top:513px;width:13px;height:1px;background:#ACA899;"></div>
<div style="left:190px;top:513px;width:1px;height:13px;background:#ACA899;"></div>
<div style="left:190px;top:525px;width:13px;height:1px;background:#FFFFFF;"></div>
<div style="left:202px;top:513px;width:1px;height:13px;background:#FFFFFF;"></div>
<div style="left:191px;top:514px;width:11px;height:1px;background:#716F64;"></div>
<div style="left:191px;top:514px;width:1px;height:11px;background:#716F64;"></div>
<div style="left:191px;top:524px;width:11px;height:1px;background:#F1EFE2;"></div>
<div style="left:201px;top:514px;width:1px;height:11px;background:#F1EFE2;"></div>
<svg style="left:190px;top:535px" width="13" height="13"><circle cx="6.5" cy="6.5" r="5" fill="#F2F0E6"/><path d="M2.4 9.6A5 5 0 0 1 9.6 2.4" stroke="#7A776C" stroke-width="1.6" fill="none"/><path d="M3.8 11A5 5 0 0 0 11 3.8" stroke="#FFFFFF" stroke-width="1.2" fill="none"/><circle cx="6.5" cy="6.5" r="1.8" fill="#A09C8C"/></svg>
<svg style="left:190px;top:559px" width="13" height="13"><circle cx="6.5" cy="6.5" r="5" fill="#F2F0E6"/><path d="M2.4 9.6A5 5 0 0 1 9.6 2.4" stroke="#7A776C" stroke-width="1.6" fill="none"/><path d="M3.8 11A5 5 0 0 0 11 3.8" stroke="#FFFFFF" stroke-width="1.2" fill="none"/></svg>
<div style="left:261px;top:474px;width:296px;height:19px;background:#fff;"></div>
<div style="left:261px;top:474px;width:296px;height:1px;background:#ACA899;"></div>
<div style="left:261px;top:474px;width:1px;height:19px;background:#ACA899;"></div>
<div style="left:261px;top:492px;width:296px;height:1px;background:#FFFFFF;"></div>
<div style="left:556px;top:474px;width:1px;height:19px;background:#FFFFFF;"></div>
<div style="left:262px;top:475px;width:294px;height:1px;background:#716F64;"></div>
<div style="left:262px;top:475px;width:1px;height:17px;background:#716F64;"></div>
<div style="left:262px;top:491px;width:294px;height:1px;background:#F1EFE2;"></div>
<div style="left:555px;top:475px;width:1px;height:17px;background:#F1EFE2;"></div>
<div style="left:262px;top:505px;width:44px;height:75px;border:1px solid #FFFFFF;box-sizing:border-box"></div>
<div style="left:261px;top:504px;width:44px;height:75px;border:1px solid #ACA899;box-sizing:border-box"></div>
<div style="left:266px;top:508px;width:34px;height:18px;background:#ECE9D8;"></div>
<div style="left:266px;top:508px;width:34px;height:1px;background:#ACA899;"></div>
<div style="left:266px;top:508px;width:1px;height:18px;background:#ACA899;"></div>
<div style="left:266px;top:525px;width:34px;height:1px;background:#FFFFFF;"></div>
<div style="left:299px;top:508px;width:1px;height:18px;background:#FFFFFF;"></div>
<div style="left:267px;top:509px;width:32px;height:1px;background:#716F64;"></div>
<div style="left:267px;top:509px;width:1px;height:16px;background:#716F64;"></div>
<div style="left:267px;top:524px;width:32px;height:1px;background:#F1EFE2;"></div>
<div style="left:298px;top:509px;width:1px;height:16px;background:#F1EFE2;"></div>
<div style="left:266px;top:543px;width:34px;height:18px;background:#ECE9D8;"></div>
<div style="left:266px;top:543px;width:34px;height:1px;background:#ACA899;"></div>
<div style="left:266px;top:543px;width:1px;height:18px;background:#ACA899;"></div>
<div style="left:266px;top:560px;width:34px;height:1px;background:#FFFFFF;"></div>
<div style="left:299px;top:543px;width:1px;height:18px;background:#FFFFFF;"></div>
<div style="left:267px;top:544px;width:32px;height:1px;background:#716F64;"></div>
<div style="left:267px;top:544px;width:1px;height:16px;background:#716F64;"></div>
<div style="left:267px;top:559px;width:32px;height:1px;background:#F1EFE2;"></div>
<div style="left:298px;top:544px;width:1px;height:16px;background:#F1EFE2;"></div>
<div style="left:316px;top:505px;width:242px;height:75px;border:1px solid #FFFFFF;box-sizing:border-box"></div>
<div style="left:315px;top:504px;width:242px;height:75px;border:1px solid #ACA899;box-sizing:border-box"></div>
<div style="left:322px;top:503px;width:104px;height:4px;background:#ECE9D8;"></div>
<div style="left:337px;top:530px;width:85px;height:18px;background:#80F080;"></div>
<div style="left:337px;top:530px;width:85px;height:1px;background:#ACA899;"></div>
<div style="left:337px;top:530px;width:1px;height:18px;background:#ACA899;"></div>
<div style="left:337px;top:547px;width:85px;height:1px;background:#FFFFFF;"></div>
<div style="left:421px;top:530px;width:1px;height:18px;background:#FFFFFF;"></div>
<div style="left:338px;top:531px;width:83px;height:1px;background:#716F64;"></div>
<div style="left:338px;top:531px;width:1px;height:16px;background:#716F64;"></div>
<div style="left:338px;top:546px;width:83px;height:1px;background:#F1EFE2;"></div>
<div style="left:420px;top:531px;width:1px;height:16px;background:#F1EFE2;"></div>
<div style="left:451px;top:530px;width:84px;height:18px;background:#FFFF00;"></div>
<div style="left:451px;top:530px;width:84px;height:1px;background:#ACA899;"></div>
<div style="left:451px;top:530px;width:1px;height:18px;background:#ACA899;"></div>
<div style="left:451px;top:547px;width:84px;height:1px;background:#FFFFFF;"></div>
<div style="left:534px;top:530px;width:1px;height:18px;background:#FFFFFF;"></div>
<div style="left:452px;top:531px;width:82px;height:1px;background:#716F64;"></div>
<div style="left:452px;top:531px;width:1px;height:16px;background:#716F64;"></div>
<div style="left:452px;top:546px;width:82px;height:1px;background:#F1EFE2;"></div>
<div style="left:533px;top:531px;width:1px;height:16px;background:#F1EFE2;"></div>
<div style="left:567px;top:480px;width:212px;height:100px;border:1px solid #FFFFFF;box-sizing:border-box"></div>
<div style="left:566px;top:479px;width:212px;height:100px;border:1px solid #ACA899;box-sizing:border-box"></div>
<div style="left:573px;top:478px;width:168px;height:4px;background:#ECE9D8;"></div>
<div style="left:632px;top:494px;width:13px;height:13px;background:#FF0000;"></div>
<div style="left:632px;top:494px;width:13px;height:1px;background:#FFFFFF;"></div>
<div style="left:632px;top:494px;width:1px;height:13px;background:#FFFFFF;"></div>
<div style="left:632px;top:506px;width:13px;height:1px;background:#716F64;"></div>
<div style="left:644px;top:494px;width:1px;height:13px;background:#716F64;"></div>
<div style="left:633px;top:495px;width:11px;height:1px;background:#F1EFE2;"></div>
<div style="left:633px;top:495px;width:1px;height:11px;background:#F1EFE2;"></div>
<div style="left:633px;top:505px;width:11px;height:1px;background:#C8C4B4;"></div>
<div style="left:643px;top:495px;width:1px;height:11px;background:#C8C4B4;"></div>
<div style="left:651px;top:493px;width:13px;height:13px;background:#fff;"></div>
<div style="left:651px;top:493px;width:13px;height:1px;background:#ACA899;"></div>
<div style="left:651px;top:493px;width:1px;height:13px;background:#ACA899;"></div>
<div style="left:651px;top:505px;width:13px;height:1px;background:#FFFFFF;"></div>
<div style="left:663px;top:493px;width:1px;height:13px;background:#FFFFFF;"></div>
<div style="left:652px;top:494px;width:11px;height:1px;background:#716F64;"></div>
<div style="left:652px;top:494px;width:1px;height:11px;background:#716F64;"></div>
<div style="left:652px;top:504px;width:11px;height:1px;background:#F1EFE2;"></div>
<div style="left:662px;top:494px;width:1px;height:11px;background:#F1EFE2;"></div>
<svg style="left:651px;top:493px" width="13" height="13"><path d="M3 5h1v1h1v1h1v-1h1v-1h1v-1h1v-1h1v3h-1v1h-1v1h-1v1h-1v1h-1v-1h-1v-1h-1v-1h-1z" fill="#000"/></svg>
<div style="left:632px;top:515px;width:13px;height:13px;background:#E040E0;"></div>
<div style="left:632px;top:515px;width:13px;height:1px;background:#FFFFFF;"></div>
<div style="left:632px;top:515px;width:1px;height:13px;background:#FFFFFF;"></div>
<div style="left:632px;top:527px;width:13px;height:1px;background:#716F64;"></div>
<div style="left:644px;top:515px;width:1px;height:13px;background:#716F64;"></div>
<div style="left:633px;top:516px;width:11px;height:1px;background:#F1EFE2;"></div>
<div style="left:633px;top:516px;width:1px;height:11px;background:#F1EFE2;"></div>
<div style="left:633px;top:526px;width:11px;height:1px;background:#C8C4B4;"></div>
<div style="left:643px;top:516px;width:1px;height:11px;background:#C8C4B4;"></div>
<div style="left:651px;top:515px;width:13px;height:13px;background:#fff;"></div>
<div style="left:651px;top:515px;width:13px;height:1px;background:#ACA899;"></div>
<div style="left:651px;top:515px;width:1px;height:13px;background:#ACA899;"></div>
<div style="left:651px;top:527px;width:13px;height:1px;background:#FFFFFF;"></div>
<div style="left:663px;top:515px;width:1px;height:13px;background:#FFFFFF;"></div>
<div style="left:652px;top:516px;width:11px;height:1px;background:#716F64;"></div>
<div style="left:652px;top:516px;width:1px;height:11px;background:#716F64;"></div>
<div style="left:652px;top:526px;width:11px;height:1px;background:#F1EFE2;"></div>
<div style="left:662px;top:516px;width:1px;height:11px;background:#F1EFE2;"></div>
<svg style="left:651px;top:515px" width="13" height="13"><path d="M3 5h1v1h1v1h1v-1h1v-1h1v-1h1v-1h1v3h-1v1h-1v1h-1v1h-1v1h-1v-1h-1v-1h-1v-1h-1z" fill="#000"/></svg>
<div style="left:632px;top:537px;width:13px;height:13px;background:#0000FF;"></div>
<div style="left:632px;top:537px;width:13px;height:1px;background:#FFFFFF;"></div>
<div style="left:632px;top:537px;width:1px;height:13px;background:#FFFFFF;"></div>
<div style="left:632px;top:549px;width:13px;height:1px;background:#716F64;"></div>
<div style="left:644px;top:537px;width:1px;height:13px;background:#716F64;"></div>
<div style="left:633px;top:538px;width:11px;height:1px;background:#F1EFE2;"></div>
<div style="left:633px;top:538px;width:1px;height:11px;background:#F1EFE2;"></div>
<div style="left:633px;top:548px;width:11px;height:1px;background:#C8C4B4;"></div>
<div style="left:643px;top:538px;width:1px;height:11px;background:#C8C4B4;"></div>
<div style="left:651px;top:536px;width:13px;height:13px;background:#fff;"></div>
<div style="left:651px;top:536px;width:13px;height:1px;background:#ACA899;"></div>
<div style="left:651px;top:536px;width:1px;height:13px;background:#ACA899;"></div>
<div style="left:651px;top:548px;width:13px;height:1px;background:#FFFFFF;"></div>
<div style="left:663px;top:536px;width:1px;height:13px;background:#FFFFFF;"></div>
<div style="left:652px;top:537px;width:11px;height:1px;background:#716F64;"></div>
<div style="left:652px;top:537px;width:1px;height:11px;background:#716F64;"></div>
<div style="left:652px;top:547px;width:11px;height:1px;background:#F1EFE2;"></div>
<div style="left:662px;top:537px;width:1px;height:11px;background:#F1EFE2;"></div>
<div style="left:735px;top:493px;width:13px;height:13px;background:#E08418;"></div>
<div style="left:735px;top:493px;width:13px;height:1px;background:#FFFFFF;"></div>
<div style="left:735px;top:493px;width:1px;height:13px;background:#FFFFFF;"></div>
<div style="left:735px;top:505px;width:13px;height:1px;background:#716F64;"></div>
<div style="left:747px;top:493px;width:1px;height:13px;background:#716F64;"></div>
<div style="left:736px;top:494px;width:11px;height:1px;background:#F1EFE2;"></div>
<div style="left:736px;top:494px;width:1px;height:11px;background:#F1EFE2;"></div>
<div style="left:736px;top:504px;width:11px;height:1px;background:#C8C4B4;"></div>
<div style="left:746px;top:494px;width:1px;height:11px;background:#C8C4B4;"></div>
<div style="left:754px;top:492px;width:13px;height:13px;background:#fff;"></div>
<div style="left:754px;top:492px;width:13px;height:1px;background:#ACA899;"></div>
<div style="left:754px;top:492px;width:1px;height:13px;background:#ACA899;"></div>
<div style="left:754px;top:504px;width:13px;height:1px;background:#FFFFFF;"></div>
<div style="left:766px;top:492px;width:1px;height:13px;background:#FFFFFF;"></div>
<div style="left:755px;top:493px;width:11px;height:1px;background:#716F64;"></div>
<div style="left:755px;top:493px;width:1px;height:11px;background:#716F64;"></div>
<div style="left:755px;top:503px;width:11px;height:1px;background:#F1EFE2;"></div>
<div style="left:765px;top:493px;width:1px;height:11px;background:#F1EFE2;"></div>
<div style="left:735px;top:514px;width:13px;height:13px;background:#20F020;"></div>
<div style="left:735px;top:514px;width:13px;height:1px;background:#FFFFFF;"></div>
<div style="left:735px;top:514px;width:1px;height:13px;background:#FFFFFF;"></div>
<div style="left:735px;top:526px;width:13px;height:1px;background:#716F64;"></div>
<div style="left:747px;top:514px;width:1px;height:13px;background:#716F64;"></div>
<div style="left:736px;top:515px;width:11px;height:1px;background:#F1EFE2;"></div>
<div style="left:736px;top:515px;width:1px;height:11px;background:#F1EFE2;"></div>
<div style="left:736px;top:525px;width:11px;height:1px;background:#C8C4B4;"></div>
<div style="left:746px;top:515px;width:1px;height:11px;background:#C8C4B4;"></div>
<div style="left:754px;top:514px;width:13px;height:13px;background:#fff;"></div>
<div style="left:754px;top:514px;width:13px;height:1px;background:#ACA899;"></div>
<div style="left:754px;top:514px;width:1px;height:13px;background:#ACA899;"></div>
<div style="left:754px;top:526px;width:13px;height:1px;background:#FFFFFF;"></div>
<div style="left:766px;top:514px;width:1px;height:13px;background:#FFFFFF;"></div>
<div style="left:755px;top:515px;width:11px;height:1px;background:#716F64;"></div>
<div style="left:755px;top:515px;width:1px;height:11px;background:#716F64;"></div>
<div style="left:755px;top:525px;width:11px;height:1px;background:#F1EFE2;"></div>
<div style="left:765px;top:515px;width:1px;height:11px;background:#F1EFE2;"></div>
<div style="left:735px;top:536px;width:13px;height:13px;background:#0A780A;"></div>
<div style="left:735px;top:536px;width:13px;height:1px;background:#FFFFFF;"></div>
<div style="left:735px;top:536px;width:1px;height:13px;background:#FFFFFF;"></div>
<div style="left:735px;top:548px;width:13px;height:1px;background:#716F64;"></div>
<div style="left:747px;top:536px;width:1px;height:13px;background:#716F64;"></div>
<div style="left:736px;top:537px;width:11px;height:1px;background:#F1EFE2;"></div>
<div style="left:736px;top:537px;width:1px;height:11px;background:#F1EFE2;"></div>
<div style="left:736px;top:547px;width:11px;height:1px;background:#C8C4B4;"></div>
<div style="left:746px;top:537px;width:1px;height:11px;background:#C8C4B4;"></div>
<div style="left:754px;top:536px;width:13px;height:13px;background:#fff;"></div>
<div style="left:754px;top:536px;width:13px;height:1px;background:#ACA899;"></div>
<div style="left:754px;top:536px;width:1px;height:13px;background:#ACA899;"></div>
<div style="left:754px;top:548px;width:13px;height:1px;background:#FFFFFF;"></div>
<div style="left:766px;top:536px;width:1px;height:13px;background:#FFFFFF;"></div>
<div style="left:755px;top:537px;width:11px;height:1px;background:#716F64;"></div>
<div style="left:755px;top:537px;width:1px;height:11px;background:#716F64;"></div>
<div style="left:755px;top:547px;width:11px;height:1px;background:#F1EFE2;"></div>
<div style="left:765px;top:537px;width:1px;height:11px;background:#F1EFE2;"></div>
<svg style="left:754px;top:536px" width="13" height="13"><path d="M3 5h1v1h1v1h1v-1h1v-1h1v-1h1v-1h1v3h-1v1h-1v1h-1v1h-1v1h-1v-1h-1v-1h-1v-1h-1z" fill="#000"/></svg>
<div style="left:626px;top:556px;width:40px;height:16px;background:#ECE9D8;"></div>
<div style="left:626px;top:556px;width:40px;height:1px;background:#FFFFFF;"></div>
<div style="left:626px;top:556px;width:1px;height:16px;background:#FFFFFF;"></div>
<div style="left:626px;top:571px;width:40px;height:1px;background:#716F64;"></div>
<div style="left:665px;top:556px;width:1px;height:16px;background:#716F64;"></div>
<div style="left:627px;top:557px;width:38px;height:1px;background:#F1EFE2;"></div>
<div style="left:627px;top:557px;width:1px;height:14px;background:#F1EFE2;"></div>
<div style="left:627px;top:570px;width:38px;height:1px;background:#ACA899;"></div>
<div style="left:664px;top:557px;width:1px;height:14px;background:#ACA899;"></div>
<div style="left:729px;top:556px;width:40px;height:17px;background:#ECE9D8;"></div>
<div style="left:729px;top:556px;width:40px;height:1px;background:#FFFFFF;"></div>
<div style="left:729px;top:556px;width:1px;height:17px;background:#FFFFFF;"></div>
<div style="left:729px;top:572px;width:40px;height:1px;background:#716F64;"></div>
<div style="left:768px;top:556px;width:1px;height:17px;background:#716F64;"></div>
<div style="left:730px;top:557px;width:38px;height:1px;background:#F1EFE2;"></div>
<div style="left:730px;top:557px;width:1px;height:15px;background:#F1EFE2;"></div>
<div style="left:730px;top:571px;width:38px;height:1px;background:#ACA899;"></div>
<div style="left:767px;top:557px;width:1px;height:15px;background:#ACA899;"></div>
<div id="tx">
<div style="left:35.10px;top:55px;font-size:12px;line-height:12px;color:#1C1C90;white-space:pre;transform:scaleX(0.9000);transform-origin:0 0">R.L.</div>
<div style="left:72.04px;top:55px;font-size:12px;line-height:12px;color:#C8141E;white-space:pre;transform:scaleX(0.9615);transform-origin:0 0">SWR</div>
<div style="left:42.00px;top:73px;font-size:12px;line-height:12px;color:#1C1C90;white-space:pre;transform:scaleX(0.8571);transform-origin:0 0">0dB</div>
<div style="left:74.14px;top:73px;font-size:12px;line-height:12px;color:#C8141E;white-space:pre;transform:scaleX(0.8636);transform-origin:0 0">10.0</div>
<div style="left:79px;top:137px;font-size:12px;line-height:12px;color:#C8141E;letter-spacing:0.000px;white-space:pre">7.5</div>
<div style="left:79px;top:201px;font-size:12px;line-height:12px;color:#C8141E;letter-spacing:0.000px;white-space:pre">5.0</div>
<div style="left:37.08px;top:158px;font-size:12px;line-height:12px;color:#1C1C90;white-space:pre;transform:scaleX(0.9231);transform-origin:0 0">10dB</div>
<div style="left:37.08px;top:242px;font-size:12px;line-height:12px;color:#1C1C90;white-space:pre;transform:scaleX(0.9231);transform-origin:0 0">20dB</div>
<div style="left:79px;top:265px;font-size:12px;line-height:12px;color:#C8141E;letter-spacing:0.000px;white-space:pre">2.5</div>
<div style="left:79px;top:288px;font-size:12px;line-height:12px;color:#C8141E;letter-spacing:0.000px;white-space:pre">1.5</div>
<div style="left:79px;top:321px;font-size:12px;line-height:12px;color:#C8141E;letter-spacing:0.000px;white-space:pre">1.0</div>
<div style="left:39.12px;top:326px;font-size:12px;line-height:12px;color:#1C1C90;white-space:pre;transform:scaleX(0.8846);transform-origin:0 0">30dB</div>
<div style="left:24.06px;top:253px;font-size:12px;line-height:12px;color:#000;white-space:pre;transform:scaleX(0.9412);transform-origin:0 0">R.L</div>
<div style="left:42.00px;top:270px;font-size:12px;line-height:12px;color:#000;white-space:pre;transform:scaleX(0.9167);transform-origin:0 0">x2</div>
<div style="left:25.10px;top:308px;font-size:12px;line-height:12px;color:#000;white-space:pre;transform:scaleX(0.9032);transform-origin:0 0">Offset</div>
<div style="left:695.10px;top:55px;font-size:12px;line-height:12px;color:#D8962C;white-space:pre;transform:scaleX(0.8974);transform-origin:0 0">PHASE</div>
<div style="left:738.06px;top:55px;font-size:12px;line-height:12px;color:#000;white-space:pre;transform:scaleX(0.9355);transform-origin:0 0">X-R-Z</div>
<div style="left:708.00px;top:73px;font-size:12px;line-height:12px;color:#D8962C;white-space:pre;transform:scaleX(0.9286);transform-origin:0 0">0 °</div>
<div style="left:736.00px;top:73px;font-size:12px;line-height:12px;color:#000;white-space:pre;transform:scaleX(0.8788);transform-origin:0 0">0 ohm</div>
<div style="left:737.08px;top:115px;font-size:12px;line-height:12px;color:#C8141E;white-space:pre;transform:scaleX(0.9211);transform-origin:0 0">50 ohm</div>
<div style="left:704.00px;top:137px;font-size:12px;line-height:12px;color:#D8962C;white-space:pre;transform:scaleX(0.9412);transform-origin:0 0">45°</div>
<div style="left:736.08px;top:137px;font-size:12px;line-height:12px;color:#000;white-space:pre;transform:scaleX(0.9211);transform-origin:0 0">75 ohm</div>
<div style="left:703px;top:200px;font-size:12px;line-height:12px;color:#D8962C;letter-spacing:0.000px;white-space:pre">90°</div>
<div style="left:738.09px;top:200px;font-size:12px;line-height:12px;color:#000;white-space:pre;transform:scaleX(0.9111);transform-origin:0 0">150 ohm</div>
<div style="left:700.96px;top:263px;font-size:12px;line-height:12px;color:#D8962C;white-space:pre;transform:scaleX(1.0435);transform-origin:0 0">135°</div>
<div style="left:738.09px;top:263px;font-size:12px;line-height:12px;color:#000;white-space:pre;transform:scaleX(0.9111);transform-origin:0 0">225 ohm</div>
<div style="left:700.96px;top:326px;font-size:12px;line-height:12px;color:#D8962C;white-space:pre;transform:scaleX(1.0435);transform-origin:0 0">180°</div>
<div style="left:738.09px;top:326px;font-size:12px;line-height:12px;color:#000;white-space:pre;transform:scaleX(0.9111);transform-origin:0 0">300 ohm</div>
<div style="left:157px;top:60px;font-size:11px;line-height:11px;color:#000;letter-spacing:0.000px;white-space:pre">Antenna</div>
<div style="left:235.06px;top:59px;font-size:11px;line-height:11px;color:#000;white-space:pre;transform:scaleX(0.9444);transform-origin:0 0">Cable Loss</div>
<div style="left:313px;top:59px;font-size:11px;line-height:11px;color:#000;letter-spacing:-0.091px;white-space:pre">Cable Length</div>
<div style="left:447.94px;top:59px;font-size:11px;line-height:11px;color:#000;white-space:pre;transform:scaleX(1.0588);transform-origin:0 0">Xtal</div>
<div style="left:531.96px;top:59px;font-size:11px;line-height:11px;color:#000;white-space:pre;transform:scaleX(1.0435);transform-origin:0 0">Filter</div>
<div style="left:596.98px;top:59px;font-size:11px;line-height:11px;color:#000;white-space:pre;transform:scaleX(1.0208);transform-origin:0 0">Generator</div>
<div style="left:321.07px;top:318px;font-size:12px;line-height:12px;color:#C8141E;white-space:pre;transform:scaleX(0.9333);transform-origin:0 0">M1</div>
<div style="left:622px;top:318px;font-size:12px;line-height:12px;color:#1C1C90;letter-spacing:0.000px;white-space:pre">M2</div>
<div style="left:24.10px;top:339px;font-size:12px;line-height:12px;color:#000;white-space:pre;transform:scaleX(0.8966);transform-origin:0 0">MARKERS</div>
<div style="left:45.13px;top:377px;font-size:12px;line-height:12px;color:#000;white-space:pre;transform:scaleX(0.8696);transform-origin:0 0">Marker 1</div>
<div style="left:45.11px;top:400px;font-size:12px;line-height:12px;color:#000;white-space:pre;transform:scaleX(0.8913);transform-origin:0 0">Marker 2</div>
<div style="left:141.00px;top:339px;font-size:12px;line-height:12px;color:#000;white-space:pre;transform:scaleX(0.9130);transform-origin:0 0">VALUES</div>
<div style="left:182.95px;top:355px;font-size:13px;line-height:13px;color:#000;white-space:pre;transform:scaleX(1.0526);transform-origin:0 0">FREQ.</div>
<div style="left:282px;top:355px;font-size:12px;line-height:12px;color:#C8141E;letter-spacing:0.000px;white-space:pre">SWR</div>
<div style="left:349px;top:355px;font-size:12px;line-height:12px;color:#D040D8;letter-spacing:3.000px;white-space:pre">|Z|</div>
<div style="left:407px;top:355px;font-size:12px;line-height:12px;color:#1C1C90;letter-spacing:0.000px;white-space:pre">R.L.</div>
<div style="left:460.08px;top:355px;font-size:12px;line-height:12px;color:#D8962C;white-space:pre;transform:scaleX(0.9231);transform-origin:0 0">PHASE</div>
<div style="left:535px;top:355px;font-size:12px;line-height:12px;color:#3CDC3C;letter-spacing:0.000px;white-space:pre">Rs</div>
<div style="left:590px;top:355px;font-size:12px;line-height:12px;color:#1E7E1E;letter-spacing:2.000px;white-space:pre">|Xs|</div>
<div style="left:166px;top:375px;font-size:13px;line-height:13px;color:#000;font-weight:bold;-webkit-text-stroke:0.35px #000;letter-spacing:0.667px;white-space:pre">21 227 427</div>
<div style="left:165px;top:399px;font-size:13px;line-height:13px;color:#000;font-weight:bold;-webkit-text-stroke:0.35px #000;letter-spacing:0.778px;white-space:pre">50 163 636</div>
<div style="left:284px;top:375px;font-size:13px;line-height:13px;color:#000;font-weight:bold;-webkit-text-stroke:0.35px #000;letter-spacing:0.000px;white-space:pre">1.14</div>
<div style="left:284px;top:399px;font-size:13px;line-height:13px;color:#000;font-weight:bold;-webkit-text-stroke:0.35px #000;letter-spacing:0.000px;white-space:pre">1.29</div>
<div style="left:342px;top:375px;font-size:13px;line-height:13px;color:#000;font-weight:bold;-webkit-text-stroke:0.35px #000;letter-spacing:0.000px;white-space:pre">45.66</div>
<div style="left:342px;top:399px;font-size:13px;line-height:13px;color:#000;font-weight:bold;-webkit-text-stroke:0.35px #000;letter-spacing:0.000px;white-space:pre">42.85</div>
<div style="left:591px;top:375px;font-size:13px;line-height:13px;color:#000;font-weight:bold;-webkit-text-stroke:0.35px #000;letter-spacing:0.000px;white-space:pre">4.42</div>
<div style="left:591px;top:399px;font-size:13px;line-height:13px;color:#000;font-weight:bold;-webkit-text-stroke:0.35px #000;letter-spacing:0.000px;white-space:pre">8.64</div>
<div style="left:722.06px;top:339px;font-size:12px;line-height:12px;color:#000;white-space:pre;transform:scaleX(0.9375);transform-origin:0 0">DISPLAY</div>
<div style="left:740.11px;top:356px;font-size:12px;line-height:12px;color:#000;white-space:pre;transform:scaleX(0.8889);transform-origin:0 0">Full</div>
<div style="left:739.96px;top:376px;font-size:12px;line-height:12px;color:#000;white-space:pre;transform:scaleX(1.0385);transform-origin:0 0">Xc/Xl</div>
<div style="left:740.08px;top:399px;font-size:12px;line-height:12px;color:#000;white-space:pre;transform:scaleX(0.9211);transform-origin:0 0">50 ohm</div>
<div style="left:24.05px;top:427px;font-size:12px;line-height:12px;color:#000;white-space:pre;transform:scaleX(0.9455);transform-origin:0 0">MIN. SWR</div>
<div style="left:45.08px;top:447px;font-size:12px;line-height:12px;color:#000;white-space:pre;transform:scaleX(0.9231);transform-origin:0 0">Min. SWR</div>
<div style="left:24.10px;top:474px;font-size:12px;line-height:12px;color:#000;white-space:pre;transform:scaleX(0.8951);transform-origin:0 0">FREQUENCY SWEEP LIMITS</div>
<div style="left:49px;top:493px;font-size:13px;line-height:13px;color:#000;font-weight:bold;-webkit-text-stroke:0.35px #000;letter-spacing:0.500px;white-space:pre">1.8</div>
<div style="left:125px;top:493px;font-size:13px;line-height:13px;color:#000;font-weight:bold;-webkit-text-stroke:0.35px #000;letter-spacing:1.000px;white-space:pre">55</div>
<div style="left:23.11px;top:514px;font-size:12px;line-height:12px;color:#000;white-space:pre;transform:scaleX(0.8889);transform-origin:0 0">MHz  (Start)</div>
<div style="left:103.10px;top:514px;font-size:12px;line-height:12px;color:#000;white-space:pre;transform:scaleX(0.9032);transform-origin:0 0">MHz  (Stop)</div>
<div style="left:43.11px;top:540px;font-size:12px;line-height:12px;color:#000;white-space:pre;transform:scaleX(0.8889);transform-origin:0 0">Full</div>
<div style="left:37.00px;top:561px;font-size:12px;line-height:12px;color:#000;white-space:pre;transform:scaleX(0.9333);transform-origin:0 0">Zoom</div>
<div style="left:125px;top:540px;font-size:12px;line-height:12px;color:#003000;letter-spacing:0.000px;white-space:pre">Save</div>
<div style="left:124.06px;top:561px;font-size:12px;line-height:12px;color:#000;white-space:pre;transform:scaleX(0.9375);transform-origin:0 0">Recall</div>
<div style="left:191.11px;top:472px;font-size:12px;line-height:12px;color:#000;white-space:pre;transform:scaleX(0.8923);transform-origin:0 0">CONTROLS</div>
<div style="left:208.04px;top:490px;font-size:12px;line-height:12px;color:#000;white-space:pre;transform:scaleX(0.9565);transform-origin:0 0">Hold</div>
<div style="left:208.09px;top:514px;font-size:12px;line-height:12px;color:#000;white-space:pre;transform:scaleX(0.9091);transform-origin:0 0">Bands</div>
<div style="left:208.07px;top:536px;font-size:12px;line-height:12px;color:#ACA899;white-space:pre;transform:scaleX(0.9333);transform-origin:0 0">HF</div>
<div style="left:209.00px;top:560px;font-size:12px;line-height:12px;color:#ACA899;white-space:pre;transform:scaleX(0.8750);transform-origin:0 0">VHF</div>
<div style="left:274.05px;top:511px;font-size:12px;line-height:12px;color:#000;white-space:pre;transform:scaleX(0.9474);transform-origin:0 0">649</div>
<div style="left:267.06px;top:531px;font-size:12px;line-height:12px;color:#000;white-space:pre;transform:scaleX(0.9375);transform-origin:0 0">Points</div>
<div style="left:274.05px;top:547px;font-size:12px;line-height:12px;color:#000;white-space:pre;transform:scaleX(0.9474);transform-origin:0 0">672</div>
<div style="left:275.18px;top:565px;font-size:12px;line-height:12px;color:#000;white-space:pre;transform:scaleX(0.8235);transform-origin:0 0">mS</div>
<div style="left:324.08px;top:499px;font-size:12px;line-height:12px;color:#000;white-space:pre;transform:scaleX(0.9159);transform-origin:0 0">BANDWIDTH and Q</div>
<div style="left:348px;top:533px;font-size:13px;line-height:13px;color:#000;font-weight:bold;-webkit-text-stroke:0.35px #000;letter-spacing:-0.111px;white-space:pre">28 936 210</div>
<div style="left:491px;top:533px;font-size:13px;line-height:13px;color:#000;font-weight:bold;-webkit-text-stroke:0.35px #000;letter-spacing:0.000px;white-space:pre">1</div>
<div style="left:355.07px;top:551px;font-size:12px;line-height:12px;color:#000;white-space:pre;transform:scaleX(0.9259);transform-origin:0 0">Bandwidth</div>
<div style="left:489px;top:551px;font-size:12px;line-height:12px;color:#000;letter-spacing:0.000px;white-space:pre">Q</div>
<div style="left:576.00px;top:474px;font-size:12px;line-height:12px;color:#000;white-space:pre;transform:scaleX(0.8901);transform-origin:0 0">TRACE ENABLE AND COLOURS</div>
<div style="left:598.04px;top:495px;font-size:12px;line-height:12px;color:#C8141E;white-space:pre;transform:scaleX(0.9615);transform-origin:0 0">SWR</div>
<div style="left:576.96px;top:514px;font-size:12px;line-height:12px;color:#D040D8;white-space:pre;transform:scaleX(1.0444);transform-origin:0 0">|Z| [ohm]</div>
<div style="left:581.04px;top:536px;font-size:12px;line-height:12px;color:#1C1C90;white-space:pre;transform:scaleX(0.9556);transform-origin:0 0">R.L. [dB]</div>
<div style="left:677.07px;top:494px;font-size:12px;line-height:12px;color:#D8962C;white-space:pre;transform:scaleX(0.9259);transform-origin:0 0">PHASE [°]</div>
<div style="left:685.09px;top:514px;font-size:12px;line-height:12px;color:#3CDC3C;white-space:pre;transform:scaleX(0.9130);transform-origin:0 0">Rs [ohm]</div>
<div style="left:676px;top:536px;font-size:12px;line-height:12px;color:#1E7E1E;letter-spacing:-0.111px;white-space:pre">|Xs| [ohm]</div>
<div style="left:640.00px;top:559px;font-size:12px;line-height:12px;color:#000;white-space:pre;transform:scaleX(0.9231);transform-origin:0 0">All</div>
<div style="left:736.04px;top:559px;font-size:12px;line-height:12px;color:#000;white-space:pre;transform:scaleX(0.9630);transform-origin:0 0">None</div>
<div style="left:8px;top:31px;font-size:11px;line-height:11px;color:#000;letter-spacing:0.000px;white-space:pre">File</div>
<div style="left:37px;top:31px;font-size:11px;line-height:11px;color:#000;letter-spacing:0.000px;white-space:pre">About</div>
</div>
</body></html>
